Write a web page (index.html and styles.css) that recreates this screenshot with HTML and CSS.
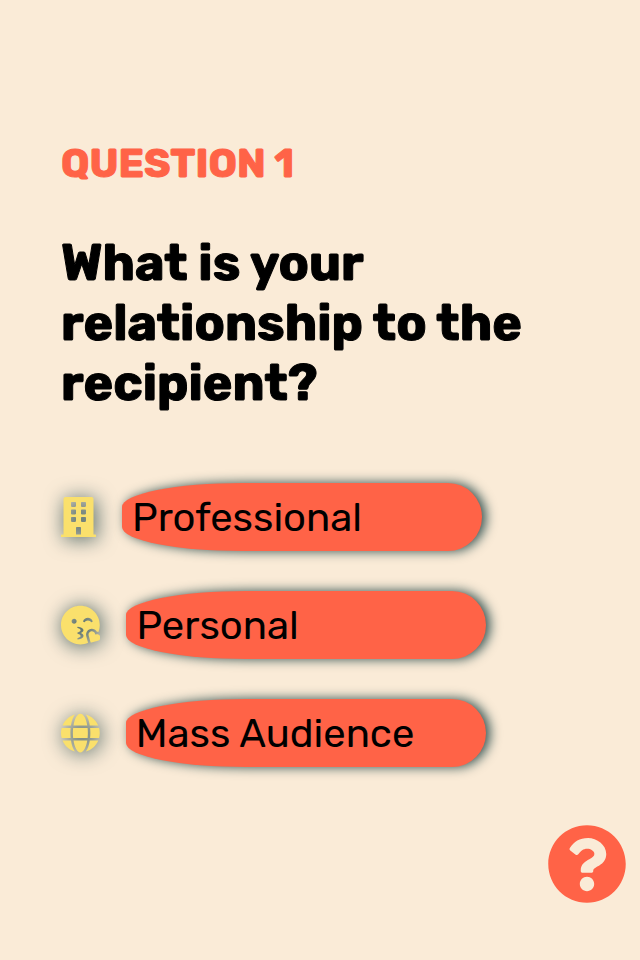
FILE: index.html
```html
<!DOCTYPE html>
<html lang="en">
<head>
<meta charset="utf-8">
<meta name="viewport" content="width=device-width, initial-scale=1">
<title>Question 1</title>
<link rel="stylesheet" href="styles.css">
</head>
<body>
<main class="quiz">
  <h2 class="step">QUESTION 1</h2>
  <h1 class="question">What is your relationship to the recipient?</h1>
  <ul class="answers">
    <li class="answer">
      <svg class="icon" viewBox="0 0 448 512" aria-hidden="true"><path d="M436 480h-20V24c0-13.255-10.745-24-24-24H56C42.745 0 32 10.745 32 24v456H12c-6.627 0-12 5.373-12 12v20h448v-20c0-6.627-5.373-12-12-12zM128 76c0-6.627 5.373-12 12-12h40c6.627 0 12 5.373 12 12v40c0 6.627-5.373 12-12 12h-40c-6.627 0-12-5.373-12-12V76zm0 96c0-6.627 5.373-12 12-12h40c6.627 0 12 5.373 12 12v40c0 6.627-5.373 12-12 12h-40c-6.627 0-12-5.373-12-12v-40zm52 148h-40c-6.627 0-12-5.373-12-12v-40c0-6.627 5.373-12 12-12h40c6.627 0 12 5.373 12 12v40c0 6.627-5.373 12-12 12zm76 160h-64v-84c0-6.627 5.373-12 12-12h40c6.627 0 12 5.373 12 12v84zm64-172c0 6.627-5.373 12-12 12h-40c-6.627 0-12-5.373-12-12v-40c0-6.627 5.373-12 12-12h40c6.627 0 12 5.373 12 12v40zm0-96c0 6.627-5.373 12-12 12h-40c-6.627 0-12-5.373-12-12v-40c0-6.627 5.373-12 12-12h40c6.627 0 12 5.373 12 12v40zm0-96c0 6.627-5.373 12-12 12h-40c-6.627 0-12-5.373-12-12V76c0-6.627 5.373-12 12-12h40c6.627 0 12 5.373 12 12v40z"/></svg>
      <button class="choice" type="button">Professional</button>
    </li>
    <li class="answer">
      <svg class="icon" viewBox="0 0 504 512" aria-hidden="true"><path d="M501.1 402.5c-8-20.8-31.5-31.5-53.1-25.9l-8.4 2.2-2.3-8.4c-5.9-21.4-27-36.5-49-33-25.2 4-40.6 28.6-34 52.6l22.9 82.6c1.5 5.3 7 8.5 12.4 7.1l83-21.5c24.1-6.3 37.7-31.8 28.5-55.7zm-177.6-4c-5.6-20.3-2.3-42 9-59.7 29.7-46.3 98.7-45.5 127.8 4.3 6.4.1 12.6 1.4 18.6 2.9 10.9-27.9 17.1-58.2 17.1-90C496 119 385 8 248 8S0 119 0 256s111 248 248 248c35.4 0 68.9-7.5 99.4-20.9-.3-.7-23.9-84.6-23.9-84.6zM168 240c-17.7 0-32-14.3-32-32s14.3-32 32-32 32 14.3 32 32-14.3 32-32 32zm120 156c0 19.2-28.7 41.5-71.5 44-8.5.8-12.1-11.8-3.6-15.4l17-7.2c13-5.5 20.8-13.5 20.8-21.5s-7.8-16-20.8-21.5l-17-7.2c-6-2.5-5.7-12.3 0-14.8l17-7.2c13-5.5 20.8-13.5 20.8-21.5s-7.8-16-20.8-21.5l-17-7.2c-8.8-3.7-4.6-16.6 3.6-15.4 42.8 2.5 71.5 24.8 71.5 44 0 13-13.4 27.3-35.2 36C274.6 368.7 288 383 288 396zm16-179c-8.3 7.4-21.6.4-19.8-10.8 4-25.2 34.2-42.1 59.9-42.1S400 181 404 206.2c1.7 11.1-11.3 18.3-19.8 10.8l-9.5-8.5c-14.8-13.2-46.2-13.2-61 0L304 217z"/></svg>
      <button class="choice" type="button">Personal</button>
    </li>
    <li class="answer">
      <svg class="icon" viewBox="0 0 496 512" aria-hidden="true"><path d="M336.5 160C322 70.7 287.8 8 248 8s-74 62.7-88.5 152h177zM152 256c0 22.2 1.2 43.5 3.3 64h185.3c2.1-20.5 3.3-41.8 3.3-64s-1.2-43.5-3.3-64H155.3c-2.1 20.5-3.3 41.8-3.3 64zm324.7-96c-28.6-67.9-86.5-120.4-158-141.6 24.4 33.8 41.2 84.7 50 141.6h108zM177.2 18.4C105.8 39.6 47.8 92.1 19.3 160h108c8.7-56.9 25.5-107.8 49.9-141.6zM487.4 192H372.7c2.1 21 3.3 42.5 3.3 64s-1.2 43-3.3 64h114.6c5.5-20.5 8.6-41.8 8.6-64s-3.1-43.5-8.5-64zM120 256c0-21.5 1.2-43 3.3-64H8.6C3.2 212.5 0 233.8 0 256s3.2 43.5 8.6 64h114.6c-2-21-3.2-42.5-3.2-64zm39.5 96c14.5 89.3 48.7 152 88.5 152s74-62.7 88.5-152h-177zm159.3 141.6c71.4-21.2 129.4-73.7 158-141.6h-108c-8.8 56.9-25.6 107.8-50 141.6zM19.3 352c28.6 67.9 86.5 120.4 158 141.6-24.4-33.8-41.2-84.7-50-141.6h-108z"/></svg>
      <button class="choice" type="button">Mass Audience</button>
    </li>
  </ul>
</main>
<button class="help" type="button" aria-label="Help">
  <svg class="help-icon" viewBox="0 0 512 512" aria-hidden="true"><path d="M504 256c0 136.997-111.043 248-248 248S8 392.997 8 256C8 119.083 119.043 8 256 8s248 111.083 248 248zM262.655 90c-54.497 0-89.255 22.957-116.549 63.758-3.536 5.286-2.353 12.415 2.715 16.258l34.699 26.31c5.205 3.947 12.621 3.008 16.665-2.122 17.864-22.658 30.113-35.797 57.303-35.797 20.429 0 45.698 13.148 45.698 32.958 0 14.976-12.363 22.667-32.534 33.976C247.128 238.528 216 254.941 216 296v4c0 6.627 5.373 12 12 12h56c6.627 0 12-5.373 12-12v-1.333c0-28.462 83.186-29.647 83.186-106.667 0-58.002-60.165-102-116.531-102zM256 338c-25.365 0-46 20.635-46 46 0 25.364 20.635 46 46 46s46-20.636 46-46c0-25.365-20.635-46-46-46z"/></svg>
</button>
</body>
</html>
```
FILE: styles.css
```css
body {
  margin: 0;
  min-height: 100vh;
  background: antiquewhite;
  color: #000;
  font-family: Rubik, Inter, "Liberation Sans", sans-serif;
}

.quiz {
  padding: 139px 61px 0;
}

.step,
.question {
  font-weight: 700;
  -webkit-text-stroke: 1px currentColor;
}

.step {
  margin: 0;
  color: tomato;
  font-size: 40px;
  line-height: 50px;
}

.question {
  margin: 44px 0 0;
  font-size: 50px;
  line-height: 60px;
}

.answers {
  display: flex;
  flex-direction: column;
  gap: 40px;
  margin: 70px 0 0;
  padding: 0;
  list-style: none;
}

.answer {
  display: flex;
  align-items: center;
  gap: 26px;
}

.icon {
  height: 40px;
  fill: #fae06c;
  filter: drop-shadow(2px 2px 10px darkslategray);
}

.choice {
  width: 360px;
  height: 68px;
  padding: 0 10px;
  border: 0;
  border-radius: 120px 34px 34px 120px / 24px 34px 34px 24px;
  background: tomato;
  box-shadow: 4px 0 12px darkslategray;
  color: #000;
  font: inherit;
  font-size: 40px;
  text-align: left;
}

.help {
  position: fixed;
  right: 13px;
  bottom: 56px;
  padding: 0;
  border: 0;
  background: none;
}

.help-icon {
  display: block;
  width: 80px;
  height: 80px;
  fill: tomato;
}
```
